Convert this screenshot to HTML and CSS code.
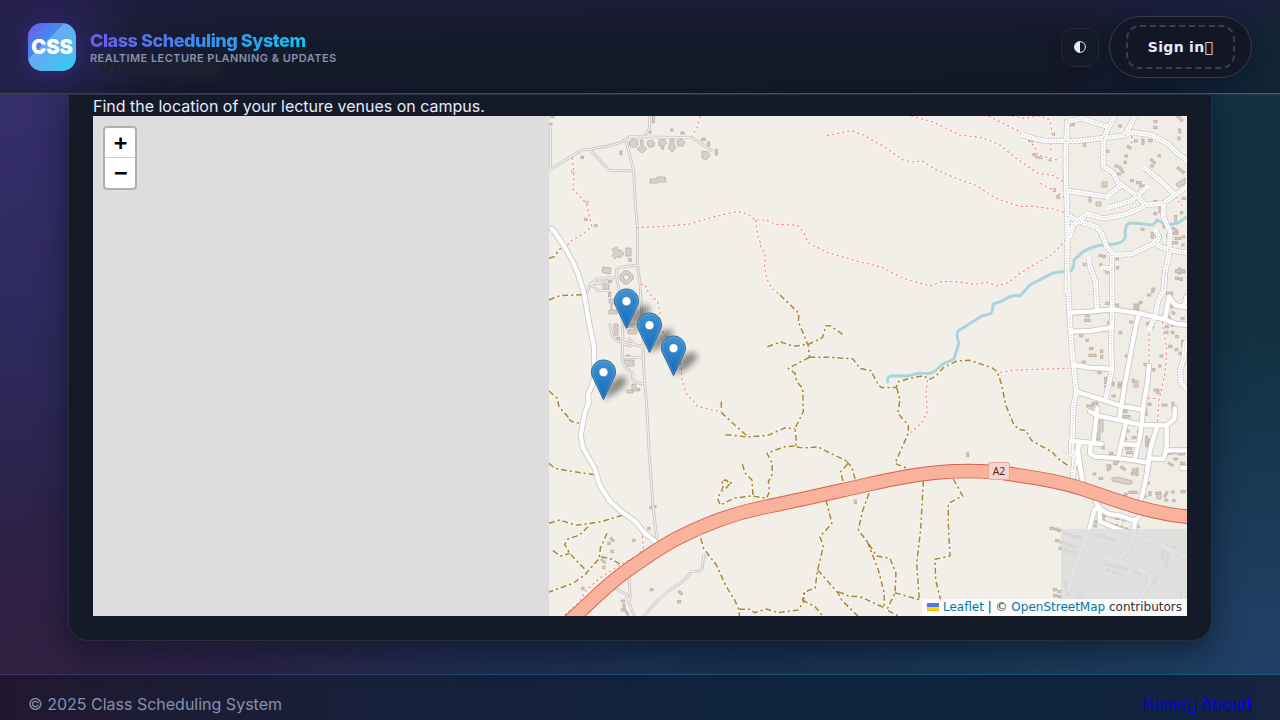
FILE: index.html
```html
<!DOCTYPE html>
<html lang="en">
<head>
<meta charset="utf-8">
<title>Class Scheduling System</title>
<link rel="stylesheet" href="styles.css">
</head>
<body>
<header class="topbar">
  <div class="brand">
    <div class="logo">CSS</div>
    <div class="brand-text">
      <div class="brand-name">Class Scheduling System</div>
      <div class="tagline">REALTIME LECTURE PLANNING &amp; UPDATES</div>
    </div>
  </div>
  <nav class="actions">
    <button class="theme"><svg width="14" height="14" viewBox="0 0 14 14"><circle cx="7" cy="7" r="5.4" fill="none" stroke="#e6ebff" stroke-width="1"/><path d="M7 1.4a5.6 5.6 0 0 0 0 11.2z" fill="#e6ebff"/></svg></button>
    <div class="nav-pill"><a class="signin">Sign in&#xf2f6;</a></div>
  </nav>
</header>
<main class="page">
  <section class="card">
    <h2 class="card-title">Venue Map</h2>
    <p class="lead">Find the location of your lecture venues on campus.</p>
    <div class="map">
      <svg class="tiles" viewBox="93 116 1094 500" width="1094" height="500">
        <defs>
          <linearGradient id="pinfill" x1="0" y1="0" x2="0" y2="1"><stop offset="0" stop-color="#3f94cf"/><stop offset="1" stop-color="#1269c0"/></linearGradient>
          <filter id="soft" x="-60%" y="-60%" width="220%" height="220%"><feGaussianBlur stdDeviation="3.4"/></filter>
          <g id="pinshadow"><path d="M12 40C14 34 19 21 28 18c8-2 11 4 4 10-6 6-14 10-20 12z" fill="#000" opacity=".44" filter="url(#soft)"/></g>
          <g id="pin"><path d="M12.5 1C5.8 1 .5 6.200.5 12.900c0 2.600.8 4.800 2.200 7.400L12.500 40.600l9.800-20.300c1.400-2.600 2.200-4.800 2.200-7.400C24.500 6.200 19.200 1 12.500 1z" fill="url(#pinfill)" stroke="#2e6c97" stroke-width="1"/><path d="M12.500 2.100C6.400 2.100 1.600 6.900 1.600 12.900c0 2.400.7 4.400 2.100 7L12.500 38.400l8.800-18.500c1.400-2.600 2.100-4.600 2.100-7C23.400 6.900 18.600 2.100 12.500 2.100z" fill="none" stroke="#fff" stroke-opacity=".16"/><circle cx="12.500" cy="13.200" r="4.500" fill="#fff" stroke="#2a75b0" stroke-width=".6"/></g>

          <!-- narrow service lanes -->
          <g id="lanes" class="net">
            <g transform="translate(548 110) scale(.33333)">
              <path d="M5 180L105 118H125L180 108 215 98 245 80 430 83 460 100 495 125M233 90L248 145 257 183 262 280 268 350V465M125 118L183 181 257 183M305 18V55L290 78M7 50V178"/>
            </g>
            <g transform="translate(548 240) scale(.33333)">
              <path d="M268 75L215 82Q205 84 205 95L207 115 213 150 220 210 225 290 222 350Q225 380 240 388L253 400 255 420 275 430 292 433M268 75L276 130 282 240 288 400 297 510M115 160L128 132 150 115 205 113M128 132L180 122M128 132L150 152 185 152M140 126L160 135M185 250L192 285 205 302 225 306 285 320M225 312L250 318M240 293L265 318M222 352L285 352"/>
            </g>
            <g transform="translate(548 410) scale(.33333)">
              <path d="M297 0L303 120 315 290 328 395M243 505L247 560 242 575 260 620M202 535L235 553 243 570M480 440L467 437 463 475 455 483 430 485 408 512 365 540 330 570 285 620"/>
            </g>
          </g>

          <g id="street" class="net">
            <path d="M551.500 228.500L554 231 564.700 247 573 262 578 274 584 293 588 317 594 347V380L588 395 588.700 403 584.700 413 580.700 435 583 448 594.700 468 599.700 485 609.700 501 622 512 636 522 644.700 533 657 543"/>
          </g>

          <g id="dirt" class="net">
            <g transform="translate(1020 110) scale(.33333)">
              <path d="M10 75Q50 90 80 93L180 92 315 76 335 67 395 75 445 102 475 132 500 150M140 540L143 370 138 210 137 130 142 35 185 25 255 48 260 50M285 15L262 60 250 85V170L280 187 292 215 320 235 350 255 375 285 430 280 500 230M345 18L315 76M145 243L260 260 300 228M375 175L425 215 460 250M268 292L335 272 380 232M145 318L185 337 228 350 245 370 260 410 285 435 335 432 410 397 417 380 408 365M405 395L420 410 450 420 500 428M150 375L160 345 200 312 250 325 310 315 360 295 375 285M430 280V320L450 365 447 430 435 490 430 540M276 435V480M206 445L213 480 M250 472L275 478"/>
            </g>
            <g transform="translate(1040 270) scale(.33333)">
              <path d="M82 0L88 120 95 230 102 300 109 365 100 410 97 515 93 545 110 555 100 600M152 -5L167 35 171 115M216 0L217 120 213 220 216 300 197 385M376 0L372 60 355 90 345 140 328 177M435 220L432 260 421 300 422 340 440 353"/>
            </g>
            <g transform="translate(1040 440) scale(.33333)"><path d="M94 0V40L104 50 98 118"/></g>
          </g>

          <g id="paved" class="net">
            <g transform="translate(1040 270) scale(.33333)">
              <path d="M88 128L150 125 216 118 300 130 370 147 410 162 440 165M92 185L150 183 213 173M104 285L150 293 216 297M297 130L285 180 272 250 255 340 238 445M109 365L165 382 240 407 310 420M327 288L322 340 311 400 305 460 300 500 285 565M150 425L172 437 260 455 305 465 380 466 403 448 405 415M172 415L160 520M258 460L245 515 235 560M95 513L185 522M152 525L150 550 165 560 240 565 325 578 M352 468L330 540 322 600M380 466V535L370 567 325 565M380 541H440M245 522L290 525M375 147L387 80 405 105 440 113M440 80L432 105M118 525L112 545 122 600M425 594H440"/>
            </g>
            <g transform="translate(1040 440) scale(.33333)">
              <path d="M113 20L120 80 128 125M327 65L315 130 302 185M163 175L178 205 205 222 240 227 285 243 300 225M176 200L163 210 150 260 130 320 105 380 85 450M178 205L180 245 220 262 275 282 330 300 390 330 440 350M285 243L280 285 268 325 235 360M130 322L190 352 235 362 300 390 325 400 330 425 300 475"/>
            </g>
          </g>

          <g id="foot" class="net">
            <g transform="translate(548 110) scale(.33333)">
              <path d="M73 142L78 200 75 237 115 280 122 310 132 350 105 372 70 392 55 410M456 18L448 50 432 80M265 353L330 350 420 343 500 320 570 304 600 312 622 330 660 330M622 330L630 380 638 400"/>
            </g>
            <g transform="translate(548 240) scale(.33333)">
              <path d="M277 133H290L303 160 328 185 336 215 333 262 360 295 385 330 400 380 402 420 415 460 450 500 520 516"/>
            </g>
            <g transform="translate(548 410) scale(.33333)"><path d="M283 378L286 415 270 435 215 465 155 505 115 540 90 580 50 615"/></g>
            <g transform="translate(760 110) scale(.33333)">
              <path d="M0 405L15 430 14 475 22 510 35 535 60 555M20 331L50 343 112 346 130 365 145 398 200 427 290 453 365 472 430 505 510 528 545 515 590 515 645 523 680 517 710 528 745 518 780 490 825 462 870 438 900 410 915 390M200 77L272 62 310 75 380 115 430 150 455 156 487 153 520 175 595 208 650 227 705 264 780 289 820 289 880 297 912 307M452 18L520 36 600 75 670 84 720 105 765 142 830 188 880 197 912 216M685 18L770 60 825 110 832 135 900 152M755 18L790 25 840 18 870 30 877 75 870 130M840 220L880 242 912 262"/>
            </g>
            <g transform="translate(740 270) scale(.33333)"><path d="M563 330L558 365 562 425 545 460 512 488M780 307L830 300 985 295"/></g>
            <g transform="translate(1020 110) scale(.33333)"><path d="M336 78L333 110M468 258L480 285 500 285"/></g>
            <g transform="translate(1040 270) scale(.33333)"><path d="M327 190V285M367 155L380 240 375 310 357 390 352 460M323 385H355"/></g>
            <g transform="translate(1040 440) scale(.33333)"><path d="M438 335L430 400 408 475"/></g>
          </g>

          <g id="tracks" class="net">
            <g transform="translate(548 240) scale(.33333)"><path d="M3 55L18 50 38 25M3 180L35 167 105 164M3 453L28 475 33 500 65 537 M520 485V512"/></g>
            <g transform="translate(548 410) scale(.33333)">
              <path d="M63 27L68 33 97 41M3 160L20 175 70 184 140 194M3 340L35 330 85 346 160 335 222 316M120 350L95 375 60 387 50 403 65 430 112 480M15 422L38 438 65 430M177 370L157 415 154 445 110 495 75 520 3 546M160 440L190 447 222 466M520 7L560 45 600 80M533 74L600 81 660 76 710 54 742 56M740 108L710 110 657 130 673 160 672 195 661 215 665 245 655 265 610 258 560 264 517 285 508 265 520 245 527 225 520 212 535 210 545 222 557 210M545 222L527 242M583 163L592 190 612 210 615 258M458 385L467 415 505 465 535 530 560 570 573 600 574 618M573 598H605L620 608 655 597 690 608 750 600 767 575 767 550 780 543"/>
            </g>
            <g transform="translate(740 270) scale(.33333)">
              <path d="M120 75L177 130 175 155 205 228 208 260M82 230L123 216 160 229 205 223 247 203 258 167 272 168 313 197M208 262L265 262 338 266 360 295 393 302 415 345 425 353 468 352 475 335 510 325 550 317 568 328 588 318 610 293 650 273 690 271 755 293 772 305 785 345 797 405 820 460 835 478 858 482 875 512 935 545 960 571 990 590M208 262L145 295 165 310 170 335 188 355 190 425 165 475 170 520 165 530L190 534 235 531 270 549 320 573 M470 353L480 390 473 430 505 465V490L465 580 508 598"/>
            </g>
            <g transform="translate(790 430) scale(.33333)">
              <path d="M170 95L185 110 197 153M173 102L152 125 160 158M108 210L126 280 90 320 100 350 83 420 75 475 45 485 37 510M37 510L75 530 100 560M83 420L145 490 155 510 205 560M145 485L175 498 210 500 280 532M237 190L217 245 205 300 232 335 260 378 300 385 318 430 315 490 290 540 330 560M232 335L265 420 283 490 282 530M315 488L390 510M400 152L392 300 380 400 388 510M490 147L518 198 475 220V280L480 378 435 388 437 450 457 530"/>
            </g>
          </g>

          <!-- building footprints -->
          <g id="blocks" class="net">
            <g transform="translate(548 110) scale(.33333)"><path d="M10 20h5M8 42h1M316 22v13M305 66h1M371 60h1M402 69h3M464 88h5M482 99v6M505 121v11M102 142h1M219 126v5M74 186h1M116 277h1M113 328h1M143 347h1M343 114h1M245 450h1"/></g>
            <g transform="translate(548 240) scale(.33333)"><path d="M185 124h3M185 160v7M246 60h1M210 295h1M238 348h5M271 449h1"/></g>
            <g transform="translate(548 410) scale(.33333)"><path d="M309 292h1M320 290h1M302 356h1M257 391h1M183 400h1M190 386l5 5M192 424h1M163 450l6 6M167 472h1M104 536h1M310 539h2M395 546l5 5M392 575h3M223 573h4M228 585v7M223 600h5M234 604l5 9"/></g>
            <g transform="translate(790 430) scale(.33333)"><path d="M533 72v5M196 214v4"/></g>
            <g transform="translate(760 110) scale(.33333)"><path d="M822 134h1M831 141h1M842 143h1M881 240h1M894 260h1M880 73h1M813 94h1"/></g>
            <g transform="translate(1020 110) scale(.33333)"><path d="M90 149h1M103 239h1M115 262h1M150 44h10M299 48h2M405 35h3M404 52h4M475 20l10 10M479 60v5M477 84v3M194 103v3M346 93h2M369 90v10M389 92h4M325 110l5 3M318 138h1M417 137h1M395 150l8 8M395 168h2M315 157h1M289 168h2M260 124h3M300 173l8 12M335 212h2M352 218h8M362 228h8M295 192h3M475 175l15 12M210 262v10M405 275h2M404 311h3M420 292v12M467 320v10M485 308v1M490 265h4M367 358h2M432 342v8M460 355l10 8M463 370h8M468 385h12M460 398h10M488 405h1M397 370v12M409 370v8M240 437h3M252 440h2M291 447h1M292 473h1M193 464h1M243 464l22 22M470 505h2M483 507h1M400 537h1M490 380h1M443 378h3M345 260h3M470 482h20M478 477v12"/></g>
            <g transform="translate(1040 270) scale(.33333)"><path d="M200 6h4M410 5h10M428 6h4M410 25h2M422 28h2M338 60v4M326 75h3M200 100h6M230 105h3M285 105h10M300 98h3M285 115h8M383 70h12M395 110h2M398 127l3 3M385 142h3M427 146h2M350 115v10M338 135h3M272 156h3M322 161h3M335 170h3M379 170h3M397 162v4M376 187h5M397 187h2M410 200h2M428 215v12M388 229h5M409 239h1M420 250h1M363 258h2M140 137h5M137 151h10M206 158h3M240 188h2M122 197h3M141 211h1M152 236h4M150 256h15M185 243v3M185 260v2M259 258h3M130 276h2M176 307h4M197 325v12M220 340v4M197 350h3M238 340h7M237 350h5M280 330v4M219 378h4M315 283h3M339 299h2M359 288h1M345 360h8M353 367h4M327 403h3M370 405h8M318 421v12M399 400v14M143 408h15M150 420h5M160 400h10M253 425h5M252 440h15M260 483h4M247 506h10M280 503h5M320 502v25M327 510v14M295 485h5M260 535h12M263 548h10M187 533h3M212 550h4M385 550h5M399 548h8M418 552h12M405 567h4M388 580l8 5M425 580h6M204 588h5M225 580l8-5"/></g>
            <g transform="translate(1040 440) scale(.33333)"><path d="M163 102h1M180 115h5M205 78h4M224 70h5M205 89l5-5M245 82l8 6M280 90v10M291 88v15M277 101h10M270 157h18M256 163h2M324 129h1M330 158v6M350 160h9M375 167l5-8M377 180h3M401 182h1M426 155h6M313 169h2M398 156h1M190 228v12M200 226h5M215 230h5M230 235h4M250 240h4M278 243h4M194 250h4M210 253h4M225 257h5M241 262h4M256 267h4M268 272h2M292 259h2M280 275h5M167 245v1M165 258h2M33 265h5M46 267h4M56 271h3M75 280h3M89 285h3M103 290h3M117 292h3M50 302h3M64 306h3M78 311h3M91 317h3M105 321h3M60 325h3M75 329h3M88 335h3M102 339h3M173 286h4M188 291h4M202 295h4M215 300h4M200 374h4M215 377h4M228 380h4M242 384h4M256 387h3M202 391h4M220 397h4M238 403h4M285 398h3M297 402h4M349 410l-3 9M343 424v4M372 335l-5 20M386 342l-4 16M378 370v8M400 320h3M375 315h3M395 335h3M410 342h4M425 345h4M77 430h2M43 449h4M57 455h4M44 467h4M58 470h4M82 461h4M118 474h3M425 457l-2 10"/></g>
          </g>
        </defs>

        <rect x="549" y="116" width="638" height="500" fill="#f2efe9"/>
        <rect x="1061" y="116" width="126" height="413" fill="#f0ede7"/>

        <path d="M888 383Q886 376 893 375.700L908 376 920 373 Q930 375 935 371L943 364 954 359 959 343Q956 336 958 331L981.700 316 990 314 Q993 312 993 304L1003 300.700 Q1011 294 1020 296L1030 285 1053 273 1071 270.500Q1074 268 1074 260L1083 251.700 Q1096 244 1115 244 1125 242 1125.500 236 1124 223 1131.700 223L1153 225 1157 220 1168 225 1178 223 1187 216.700" fill="none" stroke="#aad3df" stroke-width="2.900"/>

        <g class="footprint">
          <path d="M629 142l3-3 5 1 1 5-4 3-4-2zM640 140l3 0v5l4 4-5 4-5-4 4-4zM648 141l4-1 3 3-2 4-4 0-2-3zM659 140l5-1 3 4-3 3-5 0zM670 139l4 0v6l2 3-4 4-4-4 2-4zM677 141l4-2 4 3-2 4-5 0zM702 151l6 1 2 4-4 4-4-2z"/>
          <path d="M650 179h7v-2h8v2h1v3h-8v1h-8zM612 249l5-2 1 3 3 0 3 4-4 4-3-2-2 3-3-3 2-3zM626 248h5v8h-5zM603 267l8 1-1 6-8-2zM603 284h6v5h-6z"/>
          <path fill-rule="evenodd" d="M624 271h4l5 4v4l-5 5h-4l-4-5v-4zM626 274l-3 3 3 4 4-4z"/>
          <path d="M609 299h6v5h-3v6h5v4h-8v-4h2v-7h-2zM614 324l4 0v11h-4zM628 324h9v10h-9v-4h6v-3h-6zM624 360h10v6h-10zM632 384h4v7h-4zM627 390h6v3h-6zM1099 420h4v12h-4zM1097 433h3v7h-3zM1112 478l6-1 14 4v3l-6 0-14-3zM1157 492l4 0v7h-4zM1176 184l9-6v6l-7 3zM1134 381h4v6h-4zM1096 202h5v4h-5zM1102 182h5v5h-5z"/>
        </g>
        <use href="#blocks" class="block-edge"/><use href="#blocks" class="block-core"/>

        <use href="#lanes" class="lane-edge"/><use href="#lanes" class="lane-core"/>
        <use href="#foot" class="halo"/><use href="#foot" class="foot"/>
        <use href="#tracks" class="halo"/><use href="#tracks" class="track"/>
        <use href="#dirt" class="dirt-edge"/><use href="#paved" class="road-edge"/><use href="#street" class="road-edge"/>
        <use href="#dirt" class="road-core"/><use href="#dirt" class="dirt-grain"/>
        <use href="#paved" class="road-core"/><use href="#street" class="road-core"/>

        <path class="a2-edge" d="M565 626L576 615 C594 599 608 584 625 572S660 547 678 538 C705 524 735 513 765 507 S830 493 857 487 S907 475 937 472.500 S990 471 1010 474 S1060 481 1083 489 S1130 505 1140 507.700 S1175 516 1192 517"/>
        <path class="a2-core" d="M565 626L576 615 C594 599 608 584 625 572S660 547 678 538 C705 524 735 513 765 507 S830 493 857 487 S907 475 937 472.500 S990 471 1010 474 S1060 481 1083 489 S1130 505 1140 507.700 S1175 516 1192 517"/>
        <rect x="988.500" y="462.500" width="21" height="17" rx="2" fill="#f6d4cd" stroke="#dda79c"/>
        <text x="999" y="475" class="shield">A2</text>

        <rect x="1061" y="529" width="126" height="87" fill="#ddd" opacity=".84"/>
        <g><use href="#pinshadow" x="614" y="288"/><use href="#pinshadow" x="637" y="312"/><use href="#pinshadow" x="661" y="335"/><use href="#pinshadow" x="591" y="359"/></g>
        <g><use href="#pin" x="614" y="288"/><use href="#pin" x="637" y="312"/><use href="#pin" x="661" y="335"/><use href="#pin" x="591" y="359"/></g>
      </svg>
      <div class="zoom"><a>+</a><a>−</a></div>
      <div class="credit"><svg width="12" height="8" viewBox="0 0 12 8"><path fill="#4c7be1" d="M0 0h12v4H0z"/><path fill="#ffd500" d="M0 4h12v3H0z"/><path fill="#e0bc00" d="M0 7h12v1H0z"/></svg> <a>Leaflet</a> | © <a>OpenStreetMap</a> contributors</div>
    </div>
  </section>
</main>
<footer class="footer">
  <span>© 2025 Class Scheduling System</span>
  <span class="links"><a href="#">Home<i class="sym">&#xf2f6;</i></a> <a href="#">About<i class="sym info">ℹ</i></a></span>
</footer>
</body>
</html>
```
FILE: styles.css
```css
* { box-sizing: border-box; }
html, body { height: 720px; overflow: hidden; }
body {
  margin: 0;
  display: flex;
  flex-direction: column;
  font-family: Inter, "DejaVu Sans", sans-serif;
  font-size: 16px;
  color: #e6ebff;
  background:
    radial-gradient(ellipse 420px 420px at 0 110px, #352e6c 0, rgba(53,46,108,0) 100%),
    radial-gradient(ellipse 500px 330px at 0 690px, #321f40 0, rgba(50,31,64,0) 100%),
    radial-gradient(ellipse 500px 320px at 1280px 650px, #214067 0, rgba(33,64,103,0) 100%),
    linear-gradient(90deg, #28244d 0, #1b3050 50%, #113141 100%);
}
.topbar {
  height: 95px;
  flex: none;
  display: flex;
  align-items: center;
  justify-content: space-between;
  padding: 1px 28px 1px;
  border-bottom: 1px solid #303849;
  background:
    linear-gradient(90deg, #403a86, #45587c 45%, #17708c) 0 100% / 100% 1px no-repeat,
    radial-gradient(circle 95px at 50px 45px, rgba(56,42,120,.55), rgba(56,42,120,0)),
    linear-gradient(180deg, rgba(31,28,64,.7) 0, rgba(24,25,50,0) 42%),
    linear-gradient(90deg, #1d1d3c 0, #161a2c 18%, #131a29 55%, #141929 84%, #10233a 96%, #12252f 100%);
  background-origin: padding-box;
  background-clip: padding-box;
}
.brand, .actions { position: relative; z-index: 1; display: flex; align-items: center; }
.brand { gap: 14px; }
.logo {
  width: 48px; height: 48px; border-radius: 14px;
  display: flex; align-items: center; justify-content: center;
  font-weight: 900; font-size: 20px; letter-spacing: -.1px; color: #fff;
  background: linear-gradient(135deg, rgba(255,255,255,0) 38%, rgba(255,255,255,.24) 38%, rgba(255,255,255,.06) 95%), linear-gradient(135deg, #6f5bea 0, #3f8df0 40%, #22d3ee 100%);
  box-shadow: 0 4px 20px rgba(80,60,190,.25);
}
.brand-name {
  width: max-content;
  font-weight: 800; font-size: 18px; line-height: 22px; letter-spacing: -.45px;
  background: linear-gradient(90deg, #6d5bea, #3b8bf0 50%, #12c4f4);
  -webkit-background-clip: text; background-clip: text; color: transparent;
}
.tagline { font-size: 11px; line-height: 13px; font-weight: 600; letter-spacing: .44px; color: #8591ad; }
.actions { gap: 10px; }
.theme {
  width: 38px; height: 39px; padding: 0; border-radius: 12px;
  background: #131927; border: 1px solid #252b3a;
  display: flex; align-items: center; justify-content: center;
  box-shadow: 0 4px 12px rgba(0,0,0,.2);
}
.nav-pill {
  width: 143px; height: 62px; border-radius: 31px;
  border: 1px solid #363c4c; background: #131725;
  display: flex; align-items: center; justify-content: center;
  box-shadow: 0 6px 18px rgba(0,0,0,.25);
}
.signin {
  width: 109px; height: 44px; border: 2px dashed #3a4053; border-radius: 14px;
  display: flex; align-items: center; justify-content: center;
  font: bold 14px "DejaVu Sans", sans-serif; letter-spacing: .3px; color: #e6ebff;
}
.page { height: 579px; flex: none; padding: 0 68px; display: flow-root; }
.card {
  height: 546px; padding: 0 24px 24px; display: flow-root;
  border: 1px solid #29303c; border-top: 0; border-radius: 0 0 20px 20px;
  background: #141a27;
  box-shadow: 0 10px 30px rgba(4,10,25,.5);
  clip-path: inset(-46px -60px -60px);
}
.card-title {
  margin: -46px 0 0; height: 46px; width: 160px; font-size: 22.5px; line-height: 36px; font-weight: 700;
  letter-spacing: -.3px; padding-left: 4px;
  color: #1b212d; text-shadow: 0 0 20px rgba(190,200,200,.16);
}
.lead { margin: 0; height: 21px; line-height: 23px; letter-spacing: -.01px; }
.map { position: relative; width: 1094px; height: 500px; background: #ddd; overflow: hidden; }
.map::after { content: ""; position: absolute; inset: 0 0 auto; height: 10px; background: linear-gradient(rgba(240,220,245,.16), rgba(240,220,245,0)); }
.tiles { display: block; }
.net path { vector-effect: non-scaling-stroke; fill: none; stroke-linejoin: round; }
.footprint { fill: #d9d0c9; stroke: #c0b2a7; stroke-width: .9; }
.block-edge { stroke: #c2b3a8; stroke-width: 3.1px; stroke-linecap: square; }
.block-core { stroke: #d6cbc3; stroke-width: 1.1px; stroke-linecap: square; }
.lane-edge { stroke: #c6c6c6; stroke-width: 2.9px; }
.lane-core { stroke: #f4f3f1; stroke-width: 1.1px; }
.halo { stroke: #fff; stroke-width: 2.8px; stroke-opacity: .5; }
.foot { stroke: #fa8f83; stroke-width: 1.2px; stroke-dasharray: 2.6 2.6; }
.track { stroke: #ad8530; stroke-width: 1.5px; stroke-dasharray: 6 2.8 2.4 2.8; }
.road-edge { stroke: #c4c4c4; stroke-width: 6px; stroke-linecap: round; }
.road-core { stroke: #fff; stroke-width: 4.4px; stroke-linecap: round; }
.dirt-edge { stroke: #c0bebc; stroke-width: 6px; stroke-dasharray: 2 .8; }
.dirt-grain { stroke: #cfcfcf; stroke-width: 1.8px; stroke-dasharray: .9 1.7; }
.a2-edge { fill: none; stroke: #d65f43; stroke-width: 14.5px; }
.a2-core { fill: none; stroke: #f9b29c; stroke-width: 12.7px; }
.shield { font: 10.5px "Noto Sans", sans-serif; text-anchor: middle; fill: #5c2520; }
.zoom {
  position: absolute; left: 10px; top: 10px; width: 34px; height: 64px;
  border: 2px solid rgba(0,0,0,.2); border-radius: 4px; background: #fff; background-clip: padding-box;
}
.zoom a {
  display: block; height: 30px; text-align: center; color: #000; padding-left: 1px;
  font: bold 22px/30px "DejaVu Sans Mono", monospace;
}
.zoom a:first-child { border-bottom: 1px solid #ccc; }
.credit {
  position: absolute; right: 0; bottom: 0; height: 17px; padding: 0 5px;
  font: 12px/17px "DejaVu Sans", sans-serif; color: #333; white-space: nowrap;
  background: rgba(255,255,255,.82);
}
.credit a { color: #0078a8; }
.footer {
  height: 46px; flex: none; display: flex; justify-content: space-between;
  padding: 13px 28px 0; line-height: 32px; color: #8591ad;
  border-top: 1px solid; border-image: linear-gradient(90deg, #3c3566, #244f70 50%, #14587a) 1;
  background: linear-gradient(90deg, #21182f 0, #17203b 30%, #0f2540 65%, #11233f 92%, #182340 100%);
}
.links a { color: #0000ee; }
.sym { font-family: "DejaVu Sans", sans-serif; font-style: normal; }
.info { font-weight: 700; }
```
